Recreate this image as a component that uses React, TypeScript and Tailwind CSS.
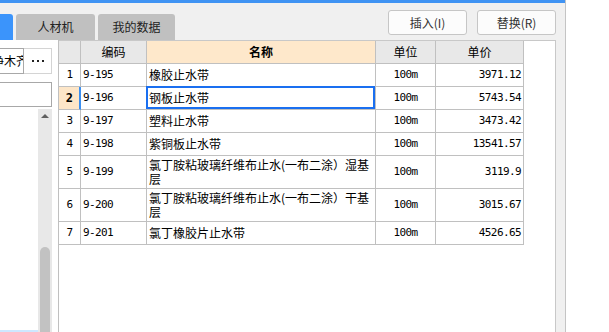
import React from "react";

type Row = { n: number; code: string; name: string; unit: string; price: string; tall?: boolean };

const rows: Row[] = [
  { n: 1, code: "9-195", name: "橡胶止水带", unit: "100m", price: "3971.12" },
  { n: 2, code: "9-196", name: "钢板止水带", unit: "100m", price: "5743.54" },
  { n: 3, code: "9-197", name: "塑料止水带", unit: "100m", price: "3473.42" },
  { n: 4, code: "9-198", name: "紫铜板止水带", unit: "100m", price: "13541.57" },
  { n: 5, code: "9-199", name: "氯丁胺粘玻璃纤维布止水(一布二涂）湿基层", unit: "100m", price: "3119.9", tall: true },
  { n: 6, code: "9-200", name: "氯丁胺粘玻璃纤维布止水(一布二涂）干基层", unit: "100m", price: "3015.67", tall: true },
  { n: 7, code: "9-201", name: "氯丁橡胶片止水带", unit: "100m", price: "4526.65" },
];

const cjk = "font-['Noto_Sans_CJK_SC',sans-serif]";
const mono = "font-['DejaVu_Sans_Mono','Noto_Sans_CJK_SC',monospace] text-[11px] tracking-[-0.6px]";

export default function App() {
  return (
    <div className={`w-[609px] h-[332px] flex bg-white overflow-hidden text-black ${cjk}`}>
      {/* main window */}
      <div className="w-[566px] h-full flex flex-col bg-[#f0f0f0] border-r border-[#c4c4c4]">
        <div className="h-[3px] bg-[#3f93f3]" />
        {/* tabs + buttons */}
        <div className="h-[37px] flex justify-between">
          <div className="flex items-end gap-[3px]">
            <div className="w-[13px] h-[26px] bg-[#3b94fb] rounded-tr-[3px]" />
            <div className="w-[79px] h-[26px] bg-[#c0c0c0] rounded-t-[3px] flex items-center justify-center text-[12px] text-[#222]">
              人材机
            </div>
            <div className="w-[77px] h-[26px] bg-[#c0c0c0] rounded-t-[3px] flex items-center justify-center text-[12px] text-[#222]">
              我的数据
            </div>
          </div>
          <div className="flex items-start gap-[10px] pt-[7px] pr-[9px]">
            <button className="w-[79px] h-[25px] bg-[#fcfcfc] border border-[#c6c6c6] rounded-[3px] text-[12px] text-[#333] flex items-center justify-center">
              插入(I)
            </button>
            <button className="w-[79px] h-[25px] bg-[#fcfcfc] border border-[#c6c6c6] rounded-[3px] text-[12px] text-[#333] flex items-center justify-center">
              替换(R)
            </button>
          </div>
        </div>
        {/* body */}
        <div className="flex-1 flex min-h-0">
          {/* left panel */}
          <div className="w-[59px] bg-white border-r border-[#c0c0c0] flex flex-col">
            <div className="mt-[8px] h-[26px] flex w-[52px]">
              <div className="w-[24px] h-full border-y border-r border-[#a8a8a8] overflow-hidden flex items-center">
                <span className="-ml-[8px] whitespace-nowrap text-[12px]">净木齐</span>
              </div>
              <div className="w-[28px] h-full border-y border-r border-[#d4d4d4] flex items-center justify-center gap-[3px]">
                <span className="w-[2px] h-[2px] bg-[#222]" />
                <span className="w-[2px] h-[2px] bg-[#222]" />
                <span className="w-[2px] h-[2px] bg-[#222]" />
              </div>
            </div>
            <div className="mt-[8px] w-[52px] h-[25px] border-y border-r border-[#a8a8a8]" />
            <div className="mt-[2px] flex-1 flex">
              <div className="w-[38px] flex flex-col">
                <div className="mt-auto h-[2px] bg-[#cde8ff]" />
              </div>
              <div className="w-[14px] bg-[#e8e8e8] flex flex-col items-center">
                <svg width="14" height="14" viewBox="0 0 14 14" className="mt-[1px]">
                  <polygon points="3,8 7,4 11,8" fill="#606060" />
                </svg>
                <div className="mt-auto w-[10px] h-[85px] bg-[#c2c2c2] rounded-t-full" />
              </div>
            </div>
          </div>
          {/* table panel */}
          <div className="w-[497px] bg-white border-r border-t border-[#c8c8c8]">
            <div className="grid grid-cols-[22px_66px_229px_60px_88px] w-[465px] text-[12px]">
              <div className="h-[23px] bg-[#e8e8e8] border-r border-b border-[#c0c0c0]" />
              <div className="h-[23px] bg-[#e8e8e8] border-r border-b border-[#c0c0c0] flex items-center justify-center">编码</div>
              <div className="h-[23px] bg-[#fee8cb] border-r border-b border-[#c0c0c0] flex items-center justify-center font-bold">名称</div>
              <div className="h-[23px] bg-[#e8e8e8] border-r border-b border-[#c0c0c0] flex items-center justify-center">单位</div>
              <div className="h-[23px] bg-[#e8e8e8] border-r border-b border-[#c0c0c0] flex items-center justify-center">单价</div>
              {rows.map((r) => {
                const h = r.tall ? "h-[33px]" : "h-[23px]";
                const sel = r.n === 2;
                return (
                  <React.Fragment key={r.n}>
                    <div
                      className={`${h} border-b border-[#c0c0c0] flex items-center justify-center ${mono} ${
                        sel ? "bg-[#fde6c8] font-bold border-r-2 border-r-[#3b8ff0] text-[12px]" : "border-r"
                      }`}
                    >
                      {r.n}
                    </div>
                    <div className={`${h} border-r border-b border-[#c0c0c0] flex items-center pl-[2px] ${mono}`}>{r.code}</div>
                    <div className={`${h} relative border-r border-b border-[#c0c0c0] flex items-center pl-[2px] leading-[14px]`}>
                      <span>{r.name}</span>
                      {sel && <div className="absolute -left-[1px] -top-[1px] right-0 bottom-0 border-2 border-[#1a6ff0]" />}
                    </div>
                    <div className={`${h} border-r border-b border-[#c0c0c0] flex items-center justify-center ${mono}`}>{r.unit}</div>
                    <div className={`${h} border-r border-b border-[#c0c0c0] flex items-center justify-end pr-[2px] ${mono}`}>{r.price}</div>
                  </React.Fragment>
                );
              })}
            </div>
          </div>
        </div>
      </div>
      <div className="flex-1 bg-white" />
    </div>
  );
}
